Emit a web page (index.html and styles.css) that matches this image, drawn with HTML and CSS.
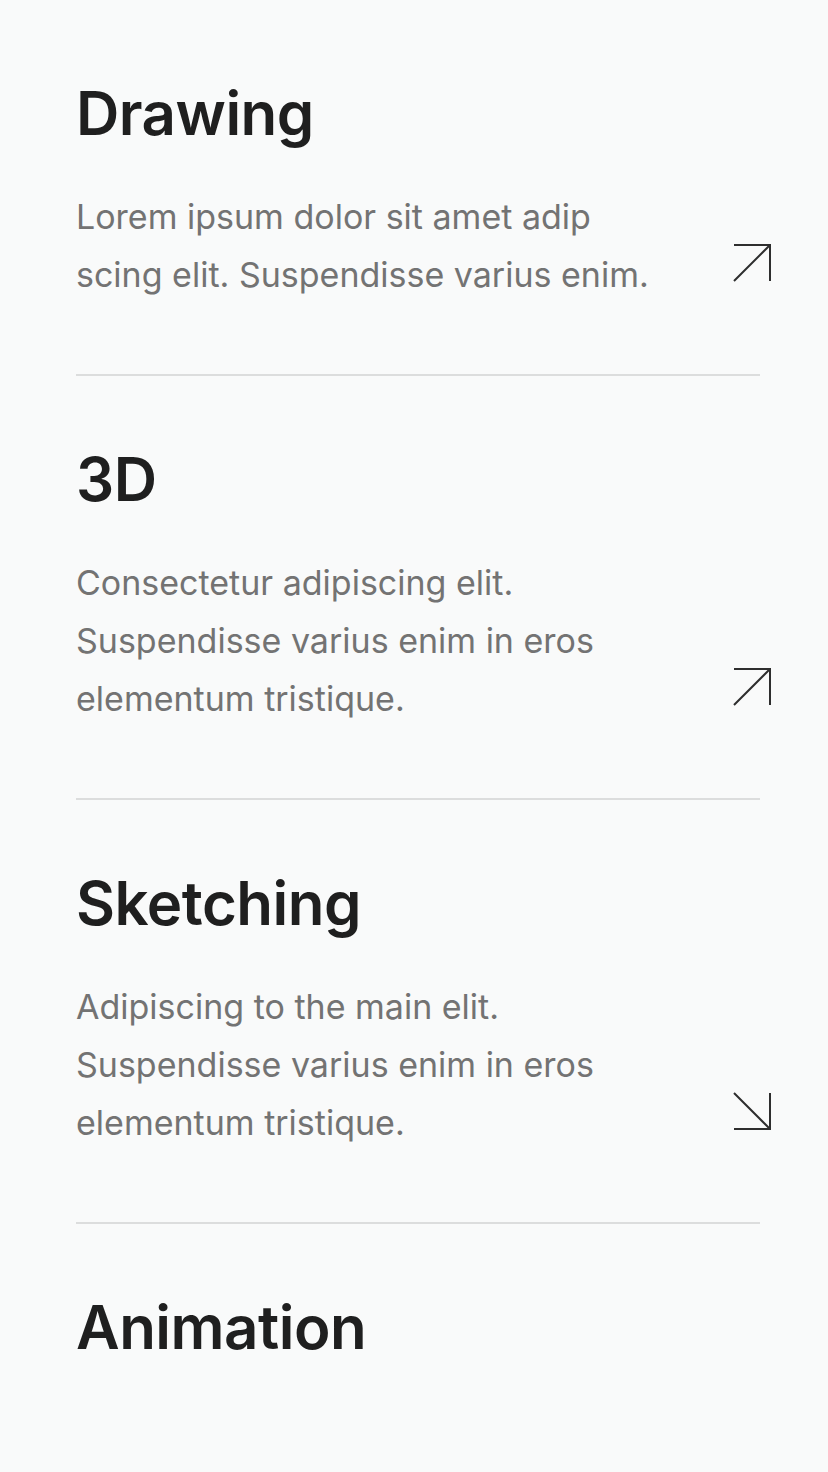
FILE: index.html
```html
<!DOCTYPE html>
<html lang="en">
<head>
<meta charset="utf-8">
<title>Services</title>
<link rel="stylesheet" href="styles.css">
</head>
<body>
<main class="services">
  <section class="service">
    <h2 class="service-title">Drawing</h2>
    <div class="service-row">
      <p class="service-text">Lorem ipsum dolor sit amet adip scing elit. Suspendisse varius enim.</p>
      <svg class="service-arrow" viewBox="0 0 38 38" aria-hidden="true"><path d="M1 37 L37 1 M1 1 H37 V37"/></svg>
    </div>
  </section>
  <section class="service">
    <h2 class="service-title">3D</h2>
    <div class="service-row">
      <p class="service-text">Consectetur adipiscing elit. Suspendisse varius enim in eros elementum tristique.</p>
      <svg class="service-arrow" viewBox="0 0 38 38" aria-hidden="true"><path d="M1 37 L37 1 M1 1 H37 V37"/></svg>
    </div>
  </section>
  <section class="service">
    <h2 class="service-title">Sketching</h2>
    <div class="service-row">
      <p class="service-text">Adipiscing to the main elit. Suspendisse varius enim in eros elementum tristique.</p>
      <svg class="service-arrow" viewBox="0 0 38 38" aria-hidden="true"><path d="M1 1 L37 37 M37 1 V37 H1"/></svg>
    </div>
  </section>
  <section class="service">
    <h2 class="service-title">Animation</h2>
  </section>
</main>
</body>
</html>
```
FILE: styles.css
```css
html, body {
  margin: 0;
  padding: 0;
  background: #f9fafa;
}

body {
  font-family: Inter, "Noto Sans", sans-serif;
  color: #1f1f1f;
}

.services {
  padding: 77px 57px 0 76px;
}

.service {
  padding-bottom: 70px;
  margin-right: 11px;
  border-bottom: 2px solid #dcdddd;
  margin-bottom: 67px;
}

.service:last-child {
  border-bottom: none;
}

.service-title {
  margin: 0;
  font-size: 60px;
  font-weight: 560;
  line-height: 72px;
  letter-spacing: -0.5px;
  color: #1f1f1f;
}

.service-row {
  display: flex;
  align-items: flex-end;
  justify-content: space-between;
  margin-top: 39px;
  margin-right: -11px;
}

.service-text {
  margin: 0;
  max-width: 590px;
  font-size: 34px;
  line-height: 58px;
  color: #737373;
}

.service-arrow {
  flex: none;
  width: 38px;
  height: 38px;
  margin-bottom: 22px;
  fill: none;
  stroke: #2e2e2e;
  stroke-width: 2;
}
```
